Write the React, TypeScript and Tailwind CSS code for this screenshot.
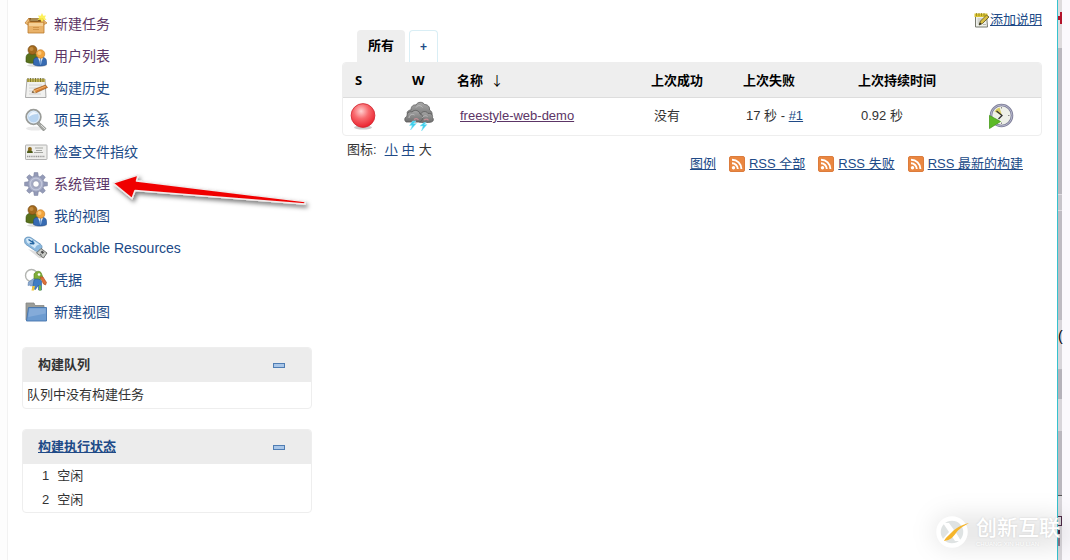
import type { ReactNode } from "react";

const link = "text-[#204a87]";
const visited = "text-[#5c3566]";

// --- Side menu icons (24px) ---
function BoxIcon() {
  return (
    <svg viewBox="0 0 24 24" className="h-6 w-6 shrink-0" aria-hidden="true">
      <path d="M5 6h14l2 4H3z" fill="#7a4f1c" />
      <path d="M7 6h8l-1 3H6z" fill="#a98a52" />
      <path d="M5 6 1 11l3 2 2-3zM17 6l6 5-4 2-2-3z" fill="#f0c07a" stroke="#b9782c" strokeWidth=".7" />
      <path d="M4 10h16v11H4z" fill="#e9b269" stroke="#b9782c" strokeWidth=".8" />
      <path d="M5 11h14v3H5z" fill="#f5cf94" />
      <path d="M9 15.500h6M9 17.500h6" stroke="#c98d43" strokeWidth=".8" />
      <path d="m18 1 1.300 2.700L22 3.500l-1.200 2.300L22.500 8l-2.900-.2L18 10l-1.600-2.200L13.500 8l1.700-2.200L14 3.500l2.700.2z" fill="#fdf04a" opacity=".9" />
    </svg>
  );
}

function PeopleIcon() {
  return (
    <svg viewBox="0 0 24 24" className="h-6 w-6 shrink-0" aria-hidden="true">
      <ellipse cx="13" cy="21.500" rx="10" ry="1.500" fill="#ddd" />
      <path d="M2 18v-4c0-3.500 2-5 6-5s6 2 6 5v4c-3 1.700-9 1.700-12 0z" fill="#58711c" stroke="#3d5210" strokeWidth=".6" />
      <circle cx="8.500" cy="6" r="4.500" fill="#a36a1d" stroke="#70440e" strokeWidth=".6" />
      <circle cx="7.500" cy="5" r="2" fill="#c38b3d" />
      <path d="M9.500 20.500v-3c0-3.500 2-4.500 6.500-4.500s6.500 1.500 6.500 4.500v3c-3.500 2-9.500 2-13 0z" fill="#376bb2" stroke="#204a87" strokeWidth=".6" />
      <path d="m14 13.500 2.500 7 2.500-7z" fill="#fff" />
      <path d="m16 14 1 0 .8 5-1.300 2-1.200-2z" fill="#6f9bd1" />
      <circle cx="16.500" cy="10" r="4.300" fill="#f1a43d" stroke="#c6781c" strokeWidth=".6" />
      <circle cx="15.500" cy="9" r="2" fill="#ffc774" />
    </svg>
  );
}

function NotepadIcon() {
  return (
    <svg viewBox="0 0 24 24" className="h-6 w-6 shrink-0" aria-hidden="true">
      <path d="M3 3h18l1 18.500H1.500z" fill="#f1f1ef" stroke="#979797" strokeWidth=".8" />
      <path d="M3 3h18v3H3z" fill="#c4b659" />
      <path d="M4 2v4M6.500 2v4M9 2v4M11.500 2v4M14 2v4M16.500 2v4M19 2v4" stroke="#817b2e" strokeWidth="1" />
      <path d="M5 9h13M5 12h9M5 15h5M5 18h12" stroke="#cbcbcb" strokeWidth=".8" />
      <path d="m8 16.500 2-3L21.500 9l2 2.500L12 16.800z" fill="#d78132" stroke="#8c4b13" strokeWidth=".6" />
      <path d="m8 16.500 2-3 2 3.300z" fill="#edd1a0" />
      <path d="m8 16.500 1-1.500 1 1.600z" fill="#333" />
      <path d="m11 14.500 10.500-4.200" stroke="#f6b97a" strokeWidth=".8" />
    </svg>
  );
}

function MagnifierIcon() {
  return (
    <svg viewBox="0 0 24 24" className="h-6 w-6 shrink-0" aria-hidden="true">
      <ellipse cx="11" cy="20.500" rx="9" ry="2" fill="#e9e9e9" />
      <path d="m15 14 7 6.500-2.500 2.500-6.500-7z" fill="#a7a9a5" stroke="#80827e" strokeWidth=".7" />
      <path d="m17 17 4 4" stroke="#e0e0e0" strokeWidth="1" />
      <circle cx="9.500" cy="9" r="7.300" fill="#c3dcf3" stroke="#9a9c98" strokeWidth="1.800" />
      <circle cx="9.500" cy="9" r="5.800" fill="#b8d4f0" stroke="#edf3f8" strokeWidth=".8" />
      <path d="M5 9c0-3 2-5 5-5 2 0 3 1 3.500 2C10 6 7 7 5 9z" fill="#f0f7fe" />
    </svg>
  );
}

function IdCardIcon() {
  return (
    <svg viewBox="0 0 24 24" className="h-6 w-6 shrink-0" aria-hidden="true">
      <rect x="1.500" y="5" width="21.500" height="14.500" rx=".6" fill="#eeeeec" stroke="#aaa" strokeWidth=".9" />
      <path d="M3 13c0-2.500 1.200-3 2.800-3s3 .8 3 3z" fill="#4c5a17" />
      <circle cx="5.900" cy="9" r="2" fill="#8c6a1d" />
      <path d="M11 8h8M12 10.500h6M10 12.500h9" stroke="#9b9d99" strokeWidth=".9" />
      <path d="M3 16.500h18" stroke="#999" strokeWidth="1.500" strokeDasharray="1.200 .6" />
    </svg>
  );
}

function GearIcon() {
  return (
    <svg viewBox="0 0 24 24" className="h-6 w-6 shrink-0" aria-hidden="true">
      <g fill="#949bb8" stroke="#737a98" strokeWidth=".5">
        {[0, 45, 90, 135, 180, 225, 270, 315].map((a) => (
          <path key={a} d="M9.500 6 10.200.6h3.600L14.500 6z" transform={`rotate(${a} 12 12)`} />
        ))}
      </g>
      <circle cx="12" cy="12" r="8" fill="#a7adc6" stroke="#868da9" strokeWidth=".6" />
      <circle cx="12" cy="12" r="5.800" fill="none" stroke="#c3c8dc" strokeWidth="1.200" />
      <circle cx="12" cy="12" r="3.300" fill="#fff" stroke="#868da9" strokeWidth=".8" />
    </svg>
  );
}

function UsbIcon() {
  return (
    <svg viewBox="0 0 24 24" className="h-6 w-6 shrink-0" aria-hidden="true">
      <path d="M4 13 15 22h6l-5-5z" fill="#ddd" />
      <path d="M.8 3c.5-2 4-2.500 6-1.500l9.500 6.500c2.500 2 2 4 .5 6-1.500 2-4 2-6 .5L2 8.500C.3 7 .3 4.500.8 3z" fill="#8ab8de" stroke="#5d8bb3" strokeWidth=".7" />
      <path d="M2 3c1.500-1.500 4-1 5.500 0l8 5.600c-2.500.3-4 1.900-4.500 4L3 6.500z" fill="#d2e8f8" />
      <path d="m4.500 3.500 6 4M8.500 4.500l.7 3.200-3.500-.2" fill="none" stroke="#2466a2" strokeWidth="1.500" />
      <path d="m17 12.500 6 4.500-3.500 5-7-5z" fill="#c9cbc7" stroke="#555753" strokeWidth=".8" />
      <path d="m18 15 1.800 1.300-1 1.300-1.700-1.300zM16 18l1.800 1.300" fill="#444" stroke="#444" strokeWidth=".7" />
    </svg>
  );
}

function KeysIcon() {
  return (
    <svg viewBox="0 0 24 24" className="h-6 w-6 shrink-0" aria-hidden="true">
      <circle cx="7.500" cy="7.500" r="6" fill="none" stroke="#b3b5b1" strokeWidth="1.400" />
      <path d="m4.500 14 6-4 3 2-5 5.500-2 .5-1-1-1.500.5z" fill="#8aa9cf" stroke="#5c7fae" strokeWidth=".6" />
      <path d="M10 6c2-3 5-3.500 7-1.500l2 5-4 3-5-2z" fill="#7fae3a" stroke="#56801b" strokeWidth=".6" />
      <circle cx="15" cy="6.500" r="1.300" fill="#fff" />
      <path d="m16 9 3 0 3.500 5.500-1 2.500-2-1-1-2z" fill="#e0703a" stroke="#a94818" strokeWidth=".6" />
      <path d="M10 12c2-2 6-1 7.500 1v9h-3v-5l-3 4.500-3-1z" fill="#3f7dc5" stroke="#245792" strokeWidth=".6" />
      <path d="m8.500 18 2.500 0-1 4.500H7.500z" fill="#edc53d" />
      <path d="M15 17.500h2.200v5H15z" fill="#70b340" />
    </svg>
  );
}

function FolderIcon() {
  return (
    <svg viewBox="0 0 24 24" className="h-6 w-6 shrink-0" aria-hidden="true">
      <path d="M2 3h8l1 2.500h9V20H2z" fill="#9b9d99" stroke="#858783" strokeWidth=".8" />
      <path d="M4.500 7.500h18V21h-20z" fill="#6c9bd0" stroke="#4574ad" strokeWidth=".9" />
      <path d="M5.400 8.500h16.200v5L4.300 17z" fill="#84abd9" />
    </svg>
  );
}

// --- Dashboard icons ---
function RedBall() {
  return (
    <svg viewBox="0 0 26 28" className="h-7 w-[26px]" role="img" aria-label="失败">
      <defs>
        <radialGradient id="ball" cx=".42" cy=".32" r=".7">
          <stop offset="0" stopColor="#ffd0d0" />
          <stop offset=".45" stopColor="#f86a6e" />
          <stop offset="1" stopColor="#ea1f2b" />
        </radialGradient>
      </defs>
      <ellipse cx="13" cy="25.500" rx="9" ry="2" fill="#ccc" />
      <circle cx="13" cy="13.500" r="11.900" fill="url(#ball)" stroke="#cf2a34" strokeWidth=".8" />
    </svg>
  );
}

function StormIcon() {
  return (
    <svg viewBox="0 0 30 30" className="h-[30px] w-[30px]" role="img" aria-label="天气">
      <defs>
        <linearGradient id="cloud" x1="0" y1="0" x2="0" y2="1">
          <stop offset="0" stopColor="#a6a6a6" />
          <stop offset="1" stopColor="#6e6e6e" />
        </linearGradient>
      </defs>
      <g fill="url(#cloud)" stroke="#5c5c5c" strokeWidth=".8">
        <path d="M7 9C7 5 9.500 3.500 12 4c1.500-3.500 7-3.500 8.500-.5C24 3.500 26 6 25.500 9c2 1 3 3 2.500 5l-4 5H7L3 12c.5-2 2-3 4-3z" />
        <path d="M15 21c-2-2-1.500-6 1.500-7 .5-4 6-4.500 7.500-1.500 3.500-.5 5 1.500 4.500 4 1.500 1.500 1 4-1 4.500-3 .8-9 .8-12.500 0z" />
        <path d="M2 21c-2-1.500-1.500-5 1-5.500-.5-3.500 2.500-5.500 5-4.500 2.500-3 7.500-1.500 8 2 3 .5 3.500 4 2 6-.5 1.500-1.500 2-3 2z" />
      </g>
      <path d="M5 17c0-3 3-4.500 5.500-3M18.500 17c.5-2 3-3 5-1.500M12 6.500c1.500-2.500 5-2.500 6.500 0" fill="none" stroke="#bdbdbd" strokeWidth="1" />
      <path d="M10 18.500c1.500-1 3.500-1 4.500.500M20 19c1.500-1 3.500-1 4.500.3" fill="none" stroke="#c78f96" strokeWidth="1.200" />
      <path d="M8.500 20 5.500 24.500h2.700L6.500 29l6-6.500H9.500l2.500-2.500zM20 21.500l-4 3.500h3l-1.500 5 5.500-6.500h-2.800l2-2z" fill="#3fcfec" stroke="#8de5f7" strokeWidth=".5" />
    </svg>
  );
}

function ScheduleIcon() {
  return (
    <svg viewBox="0 0 26 26" className="h-[26px] w-[26px]" aria-hidden="true">
      <circle cx="13.500" cy="12.500" r="10.500" fill="#eef0e8" stroke="#80819a" strokeWidth="2.600" />
      <circle cx="13.500" cy="12.500" r="10.500" fill="none" stroke="#b4b5cc" strokeWidth="1" />
      <path d="M14 12.500 6.500 8.500a8 8 0 0 1 5-4z" fill="#d9cd62" />
      <path d="m8.500 8 5.500 4.500-3.500 3.500" fill="none" stroke="#333" strokeWidth="1.300" />
      <path d="M13.500 4v1.500M21.500 12.500H20M13.500 21v-1.500" stroke="#888" strokeWidth="1" />
      <path d="M1.500 12.500 12.500 18.500 1.500 25.500z" fill="#5cba27" stroke="#479c1a" strokeWidth=".8" />
    </svg>
  );
}

function EditNoteIcon() {
  return (
    <svg viewBox="0 0 16 16" className="h-4 w-4" aria-hidden="true">
      <path d="M1.500 2.500h11l1 12.500h-12z" fill="#eef0ea" stroke="#77796e" strokeWidth="1" />
      <path d="M.5 1.500h13v3.500H.5z" fill="#d9c331" />
      <path d="M2.500 1v3M5 1v3M7.500 1v3M10 1v3" stroke="#94841a" strokeWidth=".8" />
      <path d="M3.500 7h5M3.500 9h4M3.500 11h3M9 12.500h3" stroke="#a9aba6" strokeWidth=".8" />
      <path d="m5 13 1.500-4 6-6 2.500 2-6.500 6.500z" fill="#d8bd43" stroke="#5b5320" strokeWidth=".8" />
      <path d="m5 13 1-2.500 1.600 1.500z" fill="#222" />
    </svg>
  );
}

function RssIcon() {
  return (
    <svg viewBox="0 0 16 16" className="h-4 w-4" aria-hidden="true">
      <rect x=".5" y=".5" width="15" height="15" rx="1.500" fill="#ea8741" stroke="#dc7c3c" />
      <circle cx="4.500" cy="11.700" r="1.700" fill="#fff" />
      <path d="M3 7.300a5.800 5.800 0 0 1 5.800 5.800M3 3.700a9.400 9.400 0 0 1 9.400 9.400" fill="none" stroke="#fff" strokeWidth="1.900" />
    </svg>
  );
}

// Callout pointing at the management entry
function RedArrow() {
  return (
    <svg viewBox="0 0 206 48" className="pointer-events-none absolute top-0 left-[86px] h-12 w-[206px]" aria-hidden="true">
      <defs>
        <filter id="arrow-shadow" x="-10%" y="-30%" width="120%" height="180%">
          <feDropShadow dx="2" dy="3" stdDeviation="2" floodColor="#000" floodOpacity=".5" />
        </filter>
      </defs>
      <path
        d="M5 15 30 7l-1.500 6L197 33.500v2.500L27 22.500l-3 8z"
        fill="#f00505"
        stroke="#f1ebeb"
        strokeWidth="1.500"
        strokeLinejoin="round"
        filter="url(#arrow-shadow)"
      />
    </svg>
  );
}

const tasks = [
  { label: "新建任务", icon: <BoxIcon />, color: visited },
  { label: "用户列表", icon: <PeopleIcon />, color: visited },
  { label: "构建历史", icon: <NotepadIcon />, color: link },
  { label: "项目关系", icon: <MagnifierIcon />, color: link },
  { label: "检查文件指纹", icon: <IdCardIcon />, color: link },
  { label: "系统管理", icon: <GearIcon />, color: visited, marked: true },
  { label: "我的视图", icon: <PeopleIcon />, color: link },
  { label: "Lockable Resources", icon: <UsbIcon />, color: link },
  { label: "凭据", icon: <KeysIcon />, color: link },
  { label: "新建视图", icon: <FolderIcon />, color: link },
];

const feeds = ["RSS 全部", "RSS 失败", "RSS 最新的构建"];

function Pane({ title, children }: { title: ReactNode; children: ReactNode }) {
  return (
    <section className="overflow-hidden rounded border border-[#eeeeee]">
      <header className="flex h-[34px] items-center justify-between bg-[#ececec] pr-[26px] pl-[15px]">
        <h2 className="font-bold">{title}</h2>
        <button type="button" aria-label="折叠" className="h-[5px] w-3 border border-[#4f7db3] bg-[#a9c6e8]" />
      </header>
      {children}
    </section>
  );
}

function SidePanel() {
  return (
    <aside className="w-[290px] shrink-0">
      <nav className="pt-2">
        {tasks.map((task) => (
          <div key={task.label} className="relative flex h-8 items-center">
            <a href="#" className={`ml-0.5 flex items-center gap-1.5 text-sm ${task.color}`}>
              {task.icon}
              {task.label}
            </a>
            {task.marked && <RedArrow />}
          </div>
        ))}
      </nav>
      <div className="mt-[19px] flex flex-col gap-5">
        <Pane title="构建队列">
          <p className="px-1 py-0.5 leading-[22px]">队列中没有构建任务</p>
        </Pane>
        <Pane
          title={
            <a href="#" className={`underline ${link}`}>
              构建执行状态
            </a>
          }
        >
          <ol>
            {[1, 2].map((n) => (
              <li key={n} className="flex h-6 gap-2 pl-[19px] leading-6">
                <span>{n}</span>
                <span>空闲</span>
              </li>
            ))}
          </ol>
        </Pane>
      </div>
    </aside>
  );
}

function ProjectTable() {
  return (
    <div className="overflow-hidden rounded border border-[#eeeeee]">
      <table className="w-full table-fixed border-collapse text-left">
        <colgroup>
          <col className="w-[57px]" />
          <col className="w-[45px]" />
          <col className="w-[194px]" />
          <col className="w-[92px]" />
          <col className="w-[115px]" />
          <col />
          <col className="w-[68px]" />
        </colgroup>
        <thead>
          <tr className="h-[34px] border-b border-[#dddddd] bg-[#eeeeee] font-['Noto_Sans','Noto_Sans_CJK_SC',sans-serif] text-black">
            <th className="pl-3">S</th>
            <th className="pl-3">W</th>
            <th className="pl-3">
              名称 <span className="ml-1 font-normal">↓</span>
            </th>
            <th className="pl-3">上次成功</th>
            <th className="pl-3">上次失败</th>
            <th className="pl-3">上次持续时间</th>
            <th aria-label="操作" />
          </tr>
        </thead>
        <tbody>
          <tr className="h-[38px]">
            <td className="pl-[7px]">
              <RedBall />
            </td>
            <td className="pl-1">
              <StormIcon />
            </td>
            <td className="pl-[15px]">
              <a href="#" className={`underline ${visited}`}>
                freestyle-web-demo
              </a>
            </td>
            <td className="pl-[15px]">没有</td>
            <td className="pl-[15px]">
              17 秒 -{" "}
              <a href="#" className={`underline ${link}`}>
                #1
              </a>
            </td>
            <td className="pl-[15px]">0.92 秒</td>
            <td className="pl-[15px]">
              <button type="button" aria-label="立即构建" className="block">
                <ScheduleIcon />
              </button>
            </td>
          </tr>
        </tbody>
      </table>
    </div>
  );
}

function MainPanel() {
  return (
    <main className="min-w-0 flex-1 pt-3">
      <div className="flex h-[18px] justify-end">
        <a href="#" className={`flex h-4 items-center leading-4 ${link}`}>
          <EditNoteIcon />
          <span className="underline">添加说明</span>
        </a>
      </div>
      <div className="flex gap-1 pl-[15px]">
        <a href="#" className="flex h-8 w-12 items-center justify-center rounded-t bg-[#eeeeee] font-bold text-black">
          所有
        </a>
        <a
          href="#"
          className={`flex h-8 w-[29px] items-center justify-center rounded-t border border-b-0 border-[#d9eef5] text-xs font-bold ${link}`}
        >
          +
        </a>
      </div>
      <ProjectTable />
      <div className="flex items-start justify-between pr-[19px] pl-[5px]">
        <div className="flex gap-1 pt-1 leading-5">
          <span className="mr-1">图标:</span>
          <a href="#" className={`underline ${link}`}>小</a>
          <a href="#" className={`underline ${link}`}>中</a>
          <span>大</span>
        </div>
        <div className="flex gap-[13px] pt-[18px] leading-5">
          <a href="#" className={`underline ${link}`}>图例</a>
          {feeds.map((feed) => (
            <a key={feed} href="#" className={`flex items-center gap-1 ${link}`}>
              <RssIcon />
              <span className="underline">{feed}</span>
            </a>
          ))}
        </div>
      </div>
    </main>
  );
}

// Sliver of the window lying behind the right edge
function WindowEdge() {
  return (
    <div className="flex w-[13px] shrink-0 border-l border-[#35c3cf] bg-[#fbf9fd]">
      <div className="flex w-1 flex-col bg-[#d8d5da]">
        <div className="flex h-12 flex-col items-end bg-[#dedbdd] pt-3">
          <div className="h-3 w-0.5 bg-[#b3132b]" />
          <div className="-mt-2 h-1 w-1 bg-[#b3132b]" />
        </div>
        <div className="h-[147px] border-b border-[#dedbe0] bg-[#bab7be]" />
        <div className="h-4 border-b border-[#dedbe0] bg-[#c7c4ca]" />
        <div className="h-[109px] bg-[#bebbc2]" />
        <div className="h-[50px] border-b border-[#bab7be] pt-2">
          <span className="block text-sm leading-4 text-black">(</span>
        </div>
        <div className="h-[29px] bg-[#b5b2ba]" />
        <div className="h-8" />
        <div className="h-[65px] border-b border-[#555555] bg-[#bab7be]" />
        <div className="flex grow flex-col gap-1 pt-5">
          <div className="h-2.5 w-1 border-y border-r border-[#4c2a47]" />
          <div className="h-1 w-0.5 bg-[#4c2a47]" />
          <div className="h-2 w-0.5 bg-[#8a7488]" />
        </div>
      </div>
    </div>
  );
}

function Watermark() {
  return (
    <div className="pointer-events-none absolute right-0 bottom-0 flex w-[136px] items-center gap-1.5 py-2.5">
      <div className="absolute inset-x-0 inset-y-3 rounded-full bg-black/10 blur-md" />
      <svg viewBox="0 0 36 36" className="relative h-9 w-9 shrink-0" aria-hidden="true">
        <circle cx="18" cy="18" r="13.500" fill="#dfe3e3" stroke="#fff" strokeWidth="4.500" />
        <path d="M9 9h6l5 7 1 1 6 10h-6l-4-6-5 6-4-1 7-8z" fill="#fff" />
        <path d="M10 27c1-3 4-5 8-9 4-4 9-7 17-9-7 4-10 6-13 10-3 4-5 7-12 8z" fill="#f5b52c" />
      </svg>
      <div className="relative whitespace-nowrap text-white [text-shadow:0_0_2px_#cccccc]">
        <div className="text-[21px] leading-6 font-medium">创新互联</div>
        <div className="text-[6px] leading-2">CHUANG XIN HU LIAN</div>
      </div>
    </div>
  );
}

export default function App() {
  return (
    <div className="relative flex min-h-screen overflow-hidden bg-white font-['Liberation_Sans','Noto_Sans_CJK_SC',sans-serif] text-[13px] leading-5 text-[#333333]">
      <div className="w-2 shrink-0 border-r border-[#f2f2f2] bg-[#fdfdfd]" />
      <div className="flex min-w-0 flex-1 gap-[30px] pr-[15px] pl-3.5">
        <SidePanel />
        <MainPanel />
      </div>
      <WindowEdge />
      <Watermark />
    </div>
  );
}
